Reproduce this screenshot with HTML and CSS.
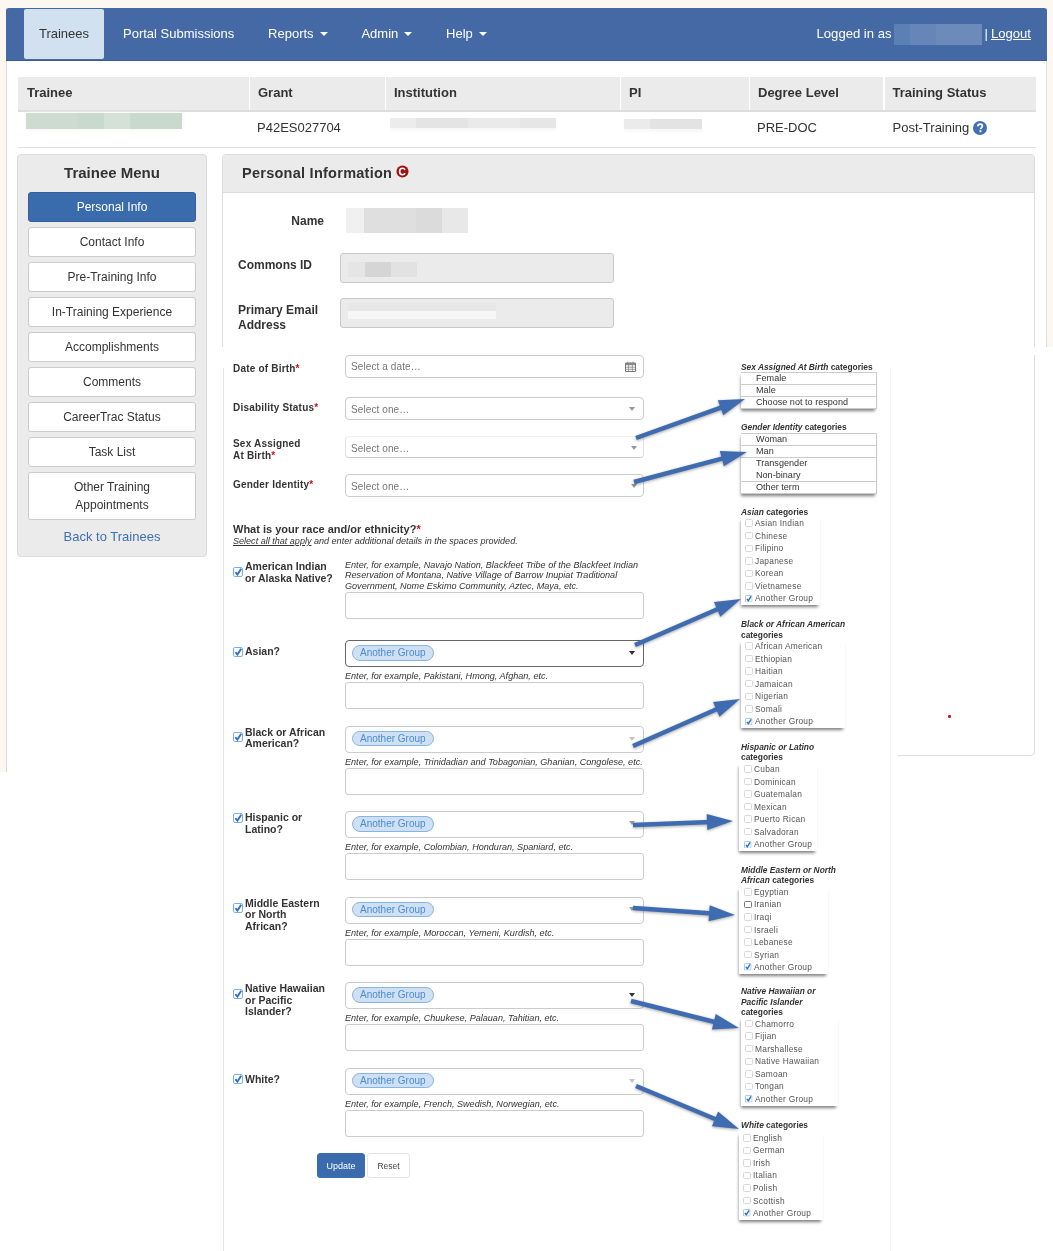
FILE: index.html
```html
<!DOCTYPE html>
<html lang="en">
<head>
<meta charset="utf-8">
<title>Personal Information</title>
<link rel="stylesheet" href="styles.css">
</head>
<body>
<svg class="defs" width="0" height="0" aria-hidden="true">
  <symbol id="tick" viewBox="0 0 10 10"><rect x=".5" y=".5" width="9" height="9" rx="1.5" fill="#fff" stroke="#7db0ea"/><path d="M2.4 5.2 4.4 7.6 8.2 1.8" fill="none" stroke="#2f74c8" stroke-width="1.9"/></symbol>
  <marker id="head" markerUnits="userSpaceOnUse" markerWidth="30" markerHeight="18" refX="6" refY="9" orient="auto"><path d="M2 1 28 9 2 17Z" fill="#3f6cb0"/></marker>
</svg>

<div class="page">
  <div class="frame">
    <nav class="nav">
      <a class="tab">Trainees</a>
      <a class="nav-item nav-first">Portal Submissions</a>
      <a class="nav-item">Reports<i class="nav-caret"></i></a>
      <a class="nav-item">Admin<i class="nav-caret"></i></a>
      <a class="nav-item">Help<i class="nav-caret"></i></a>
      <div class="nav-user">Logged in as<span class="redact redact-user"></span><span class="pipe">|</span><a class="logout">Logout</a></div>
    </nav>

    <div class="content">
      <div class="summary">
        <div class="summary-head">
          <div>Trainee</div><div>Grant</div><div>Institution</div><div>PI</div><div>Degree Level</div><div>Training Status</div>
        </div>
        <div class="summary-row">
          <div class="cell-trainee"><span class="redact redact-green"></span></div>
          <div class="cell-text">P42ES027704</div>
          <div class="cell-inst"><span class="redact redact-inst"></span></div>
          <div class="cell-pi"><span class="redact redact-pi"></span></div>
          <div class="cell-text">PRE-DOC</div>
          <div class="cell-status">Post-Training
            <svg class="help" viewBox="0 0 14 14" aria-hidden="true"><circle cx="7" cy="7" r="7" fill="#3f6fb5"/><path d="M4.7 5.4C4.8 3.9 5.8 3.1 7.1 3.1 8.500 3.100 9.400 4 9.400 5.100 9.400 6.500 7.500 6.700 7.500 8.300" fill="none" stroke="#fff" stroke-width="1.700"/><rect x="6.500" y="9.300" width="2" height="1.900" fill="#fff"/></svg>
          </div>
        </div>
      </div>

      <div class="columns">
        <aside class="menu">
          <h2 class="menu-title">Trainee Menu</h2>
          <a class="menu-btn menu-active">Personal Info</a>
          <a class="menu-btn">Contact Info</a>
          <a class="menu-btn">Pre-Training Info</a>
          <a class="menu-btn">In-Training Experience</a>
          <a class="menu-btn">Accomplishments</a>
          <a class="menu-btn">Comments</a>
          <a class="menu-btn">CareerTrac Status</a>
          <a class="menu-btn">Task List</a>
          <a class="menu-btn menu-tall">Other Training<br>Appointments</a>
          <a class="menu-back">Back to Trainees</a>
        </aside>

        <section class="card">
          <header class="card-head">
            <h1 class="card-title">Personal Information</h1>
            <svg class="c-icon" viewBox="0 0 14 14" aria-hidden="true"><circle cx="7" cy="7" r="6.500" fill="#a30f0f"/><path d="M9.800 5.200C9.100 3.900 8.100 3.500 7 3.500 5.100 3.500 3.900 5 3.900 7 3.900 9 5.100 10.500 7 10.500 8.100 10.500 9.100 10.100 9.800 8.800" fill="none" stroke="#fff" stroke-width="1.800"/></svg>
          </header>
          <div class="card-body">
            <div class="info-row info-name"><div class="info-label-right">Name</div><span class="redact redact-name"></span></div>
            <div class="info-row info-commons"><div class="info-label">Commons ID</div><div class="readonly"><span class="redact redact-commons"></span></div></div>
            <div class="info-row info-email"><div class="info-label">Primary Email<br>Address</div><div class="readonly"><span class="redact redact-email"></span></div></div>
          </div>
        </section>
      </div>
    </div>
  </div>
</div>

<div class="patch patch-top"></div>
<div class="patch patch-right"></div>
<i class="red-dot"></i>

<div class="sheet">
  <form class="form-col">
    <div class="row row-dob"><label class="f-label">Date of Birth<b>*</b></label><div class="field field-23"><span class="ph">Select a date…</span>
      <svg class="cal" viewBox="0 0 11 11" aria-hidden="true"><path d="M.5 2h10v8.500H.5z" fill="#fff" stroke="#777"/><path d="M.5 2h10v2.200H.5z" fill="#888"/><path d="M3 .5v2M8 .5v2M.5 6.200h10M.5 8.300h10M3.600 4v6M7.300 4v6" stroke="#888" stroke-width=".8"/></svg></div></div>
    <div class="row row-dis"><label class="f-label f-label-dis">Disability Status<b>*</b></label><div class="field field-23"><span class="ph ph-sel">Select one…</span><i class="caret"></i></div></div>
    <div class="row row-sex"><label class="f-label f-label-sex">Sex Assigned<br>At Birth<b>*</b></label><div class="field field-22 field-soft"><span class="ph ph-sel">Select one…</span><i class="caret caret-right"></i></div></div>
    <div class="row row-gender"><label class="f-label f-label-gender">Gender Identity<b>*</b></label><div class="field field-23"><span class="ph ph-sel">Select one…</span><i class="caret caret-right"></i></div></div>

    <h3 class="race-title">What is your race and/or ethnicity?<b>*</b></h3>
    <p class="race-sub"><u>Select all that apply</u> and enter additional details in the spaces provided.</p>

    <div class="race-row race-first">
      <div class="race-label"><svg class="check"><use href="#tick"/></svg><span>American Indian<br>or Alaska Native?</span></div>
      <div class="race-field">
        <p class="hint hint-long">Enter, for example, Navajo Nation, Blackfeet Tribe of the Blackfeet Indian Reservation of Montana, Native Village of Barrow Inupiat Traditional Government, Nome Eskimo Community, Aztec, Maya, etc.</p>
        <input class="detail" type="text">
      </div>
    </div>

    <div class="race-list">
      <div class="race-row">
        <div class="race-label race-label-low"><svg class="check check-top"><use href="#tick"/></svg><span>Asian?</span></div>
        <div class="race-field"><div class="field field-27 field-focus"><span class="chip">Another Group</span><i class="caret caret-dark"></i></div><p class="hint">Enter, for example, Pakistani, Hmong, Afghan, etc.</p><input class="detail" type="text"></div>
      </div>
      <div class="race-row">
        <div class="race-label"><svg class="check"><use href="#tick"/></svg><span>Black or African<br>American?</span></div>
        <div class="race-field"><div class="field field-27"><span class="chip">Another Group</span><i class="caret caret-light"></i></div><p class="hint">Enter, for example, Trinidadian and Tobagonian, Ghanian, Congolese, etc.</p><input class="detail" type="text"></div>
      </div>
      <div class="race-row">
        <div class="race-label"><svg class="check check-top"><use href="#tick"/></svg><span>Hispanic or<br>Latino?</span></div>
        <div class="race-field"><div class="field field-27"><span class="chip">Another Group</span><i class="caret"></i></div><p class="hint">Enter, for example, Colombian, Honduran, Spaniard, etc.</p><input class="detail" type="text"></div>
      </div>
      <div class="race-row">
        <div class="race-label"><svg class="check"><use href="#tick"/></svg><span>Middle Eastern<br>or North<br>African?</span></div>
        <div class="race-field"><div class="field field-27"><span class="chip">Another Group</span><i class="caret"></i></div><p class="hint">Enter, for example, Moroccan, Yemeni, Kurdish, etc.</p><input class="detail" type="text"></div>
      </div>
      <div class="race-row">
        <div class="race-label"><svg class="check"><use href="#tick"/></svg><span>Native Hawaiian<br>or Pacific<br>Islander?</span></div>
        <div class="race-field"><div class="field field-27"><span class="chip">Another Group</span><i class="caret caret-dark"></i></div><p class="hint">Enter, for example, Chuukese, Palauan, Tahitian, etc.</p><input class="detail" type="text"></div>
      </div>
      <div class="race-row">
        <div class="race-label race-label-low"><svg class="check check-top"><use href="#tick"/></svg><span>White?</span></div>
        <div class="race-field"><div class="field field-27"><span class="chip">Another Group</span><i class="caret caret-light"></i></div><p class="hint">Enter, for example, French, Swedish, Norwegian, etc.</p><input class="detail" type="text"></div>
      </div>
    </div>

    <div class="actions"><button class="btn-update" type="button">Update</button><button class="btn-reset" type="button">Reset</button></div>
  </form>

  <div class="notes">
    <div class="cat cat-list">
      <div class="cat-title"><em>Sex Assigned At Birth</em> categories</div>
      <ul class="list-box"><li>Female</li><li>Male</li><li>Choose not to respond</li></ul>
    </div>
    <div class="cat cat-list">
      <div class="cat-title"><em>Gender Identity</em> categories</div>
      <ul class="list-box"><li>Woman</li><li>Man</li><li class="no-line">Transgender</li><li>Non-binary</li><li>Other term</li></ul>
    </div>
    <div class="cat">
      <div class="cat-title"><em>Asian</em> categories</div>
      <ul class="check-box w-asian">
        <li><i class="box"></i>Asian Indian</li><li><i class="box"></i>Chinese</li><li><i class="box"></i>Filipino</li><li><i class="box"></i>Japanese</li><li><i class="box"></i>Korean</li><li><i class="box"></i>Vietnamese</li><li><svg class="box-on"><use href="#tick"/></svg>Another Group</li>
      </ul>
    </div>
    <div class="cat">
      <div class="cat-title"><em>Black or African American</em><br>categories</div>
      <ul class="check-box w-black">
        <li><i class="box"></i>African American</li><li><i class="box"></i>Ethiopian</li><li><i class="box"></i>Haitian</li><li><i class="box"></i>Jamaican</li><li><i class="box"></i>Nigerian</li><li><i class="box"></i>Somali</li><li><svg class="box-on"><use href="#tick"/></svg>Another Group</li>
      </ul>
    </div>
    <div class="cat">
      <div class="cat-title"><em>Hispanic or Latino</em><br>categories</div>
      <ul class="check-box w-hisp">
        <li><i class="box"></i>Cuban</li><li><i class="box"></i>Dominican</li><li><i class="box"></i>Guatemalan</li><li><i class="box"></i>Mexican</li><li><i class="box"></i>Puerto Rican</li><li><i class="box"></i>Salvadoran</li><li><svg class="box-on"><use href="#tick"/></svg>Another Group</li>
      </ul>
    </div>
    <div class="cat">
      <div class="cat-title"><em>Middle Eastern or North<br>African</em> categories</div>
      <ul class="check-box w-mid">
        <li><i class="box"></i>Egyptian</li><li><i class="box box-dark"></i>Iranian</li><li><i class="box"></i>Iraqi</li><li><i class="box"></i>Israeli</li><li><i class="box"></i>Lebanese</li><li><i class="box"></i>Syrian</li><li><svg class="box-on"><use href="#tick"/></svg>Another Group</li>
      </ul>
    </div>
    <div class="cat cat-native">
      <div class="cat-title"><em>Native Hawaiian or<br>Pacific Islander</em><br>categories</div>
      <ul class="check-box w-native">
        <li><i class="box"></i>Chamorro</li><li><i class="box"></i>Fijian</li><li><i class="box"></i>Marshallese</li><li><i class="box"></i>Native Hawaiian</li><li><i class="box"></i>Samoan</li><li><i class="box"></i>Tongan</li><li><svg class="box-on"><use href="#tick"/></svg>Another Group</li>
      </ul>
    </div>
    <div class="cat">
      <div class="cat-title"><em>White</em> categories</div>
      <ul class="check-box w-white">
        <li><i class="box"></i>English</li><li><i class="box"></i>German</li><li><i class="box"></i>Irish</li><li><i class="box"></i>Italian</li><li><i class="box"></i>Polish</li><li><i class="box"></i>Scottish</li><li><svg class="box-on"><use href="#tick"/></svg>Another Group</li>
      </ul>
    </div>
  </div>

  <svg class="arrows" viewBox="222 347 676 904" aria-hidden="true">
    <g stroke="#3f6cb0" stroke-width="4.500">
      <line x1="636" y1="438" x2="724.300" y2="406.400" marker-end="url(#head)"/>
      <line x1="634" y1="482" x2="725.700" y2="457.600" marker-end="url(#head)"/>
      <line x1="635" y1="645" x2="720.800" y2="607.800" marker-end="url(#head)"/>
      <line x1="633" y1="746" x2="719.900" y2="707.800" marker-end="url(#head)"/>
      <line x1="633" y1="825" x2="711" y2="821.900" marker-end="url(#head)"/>
      <line x1="633" y1="908" x2="713.100" y2="913.500" marker-end="url(#head)"/>
      <line x1="631" y1="1001" x2="717.700" y2="1022.700" marker-end="url(#head)"/>
      <line x1="636" y1="1086" x2="718.700" y2="1120.500" marker-end="url(#head)"/>
    </g>
  </svg>
</div>
</body>
</html>
```
FILE: styles.css
```css
* { box-sizing: border-box; }
html, body { margin: 0; padding: 0; background: #fff; }
body {
  position: relative;
  height: 1251px;
  overflow: hidden;
  font-family: "Liberation Sans", Arial, sans-serif;
  color: #333;
  filter: blur(.3px);
}
.defs { position: absolute; }
a { color: inherit; text-decoration: none; }
h1, h2, h3, p, ul { margin: 0; padding: 0; }
ul { list-style: none; }
i { display: block; }

/* page frame */
.page { height: 772px; padding: 8px 6px 0; background: #fcf7f1; }
.frame { height: 764px; background: #fff; border-left: 1px solid #ddd; border-right: 1px solid #ddd; }

/* nav */
.nav {
  height: 53px;
  margin: 0 -1px;
  padding: 1px 16px 1px 18px;
  display: flex;
  align-items: stretch;
  background: #4469a5;
  border-bottom: 1px solid #3b5e96;
  border-radius: 3px 3px 0 0;
  color: #fff;
  font-size: 13px;
}
.tab { width: 80px; padding-bottom: 2px; display: flex; align-items: center; justify-content: center; background: #d2e1f0; color: #333; border-radius: 2px; }
.nav-item { display: flex; align-items: center; margin-left: 33.800px; padding-bottom: 2px; }
.nav-first { margin-left: 19px; }
.nav-caret { width: 0; height: 0; margin: 2px 0 0 6px; border: 4px solid transparent; border-top-color: #fff; border-bottom: 0; }
.nav-user { margin-left: auto; padding-bottom: 2px; display: flex; align-items: center; font-size: 13.100px; }
.redact-user { width: 88px; height: 21px; margin: 2px 3px 0 2px; background: linear-gradient(90deg, #5d80b4 0 16px, #6685b8 16px 42px, #6c8bbb 42px); }
.pipe { margin-right: 3px; }
.logout { text-decoration: underline; }

.content { padding: 0 10px; }

/* summary table */
.summary { margin: 16px 0 0 1px; font-size: 13px; }
.summary-head, .summary-row { display: grid; grid-template-columns: 230.5px 134.5px 233.5px 127.5px 133px 151.5px; column-gap: 1.5px; }
.summary-head { height: 35px; border-bottom: 2px solid #ddd; font-size: 13px; font-weight: bold; }
.summary-head > div { padding: 0 8px; background: #ebebeb; line-height: 31px; }
.summary-head > div:first-child { padding-left: 9px; }
.summary-row { height: 36px; border-bottom: 1px solid #e2e2e2; }
.redact { display: block; }
.redact-green { width: 156px; height: 16px; margin: 1px 0 0 8px; box-shadow: 0 0 5px #f3f3f3; background: linear-gradient(90deg, #cddcce 0 52px, #c9d9cb 52px 78px, #d4e2d5 78px 104px, #c9d9cb 104px); }
.cell-text { padding: 9px 0 0 7px; line-height: 14px; }
.cell-inst { padding: 6px 0 0 4px; }
.redact-inst { width: 166px; height: 10px; box-shadow: 0 3px 3px #f8f8f8; background: linear-gradient(90deg, #ececec 0 26px, #e4e4e4 26px 78px, #eaeaea 78px 130px, #e6e6e6 130px); }
.cell-pi { padding: 7px 0 0 3px; }
.redact-pi { width: 78px; height: 10px; box-shadow: 0 3px 3px #f8f8f8; background: linear-gradient(90deg, #ebebeb 0 26px, #e3e3e3 26px); }
.cell-status { padding: 9px 0 0 8px; display: flex; align-items: flex-start; line-height: 14px; gap: 4px; white-space: nowrap; }
.help { width: 14px; height: 14px; }

/* columns */
.columns { display: flex; gap: 15px; margin-top: 6px; }
.menu {
  width: 190px;
  height: 403px;
  padding: 0 10px;
  display: flex;
  flex-direction: column;
  background: #ebebeb;
  border: 1px solid #ddd;
  border-radius: 4px;
  font-size: 12px;
}
.menu-title { height: 37px; margin: 0; font-size: 15px; line-height: 36px; text-align: center; }
.menu-btn { height: 30px; margin-bottom: 5px; display: flex; align-items: center; justify-content: center; text-align: center; background: #fff; border: 1px solid #ccc; border-radius: 3px; line-height: 18px; }
.menu-active { background: #3a6cad; border-color: #345f9b; color: #fff; }
.menu-tall { height: 48px; }
.menu-back { margin-top: 3px; color: #3f6fb0; font-size: 13px; line-height: 18px; text-align: center; }

.card { width: 813px; height: 602px; position: relative; background: #fff; border: 1px solid #ddd; border-radius: 4px; }
.card-head { height: 38px; padding: 0 0 2px 19px; display: flex; align-items: center; background: #ebebeb; border-bottom: 1px solid #ddd; border-radius: 3px 3px 0 0; }
.card-title { font-size: 14.500px; letter-spacing: .26px; }
.c-icon { width: 13px; height: 13px; margin: -3px 0 0 4px; }
.card-body { padding-top: 15px; font-size: 12px; font-weight: bold; }
.info-row { display: flex; }
.info-name { height: 25px; margin-bottom: 20px; align-items: center; }
.info-label-right { width: 101px; text-align: right; }
.redact-name { width: 122px; height: 25px; margin-left: 22px; background: linear-gradient(90deg, #f0f0f0 0 18px, #dfdfdf 18px 70px, #dbdbdb 70px 96px, #e8e8e8 96px); }
.info-commons { height: 30px; margin-bottom: 15px; }
.info-email { height: 30px; }
.info-label { width: 117px; padding: 5px 0 0 15px; line-height: 15px; }
.readonly { width: 274px; height: 30px; padding: 5px 7px; background: #ebebeb; border: 1px solid #c9c9c9; border-radius: 3px; }
.redact-commons { width: 69px; height: 15px; margin-top: 3px; background: linear-gradient(90deg, #e5e5e5 0 17px, #d5d5d5 17px 43px, #e2e2e2 43px); }
.redact-email { width: 148px; height: 16px; margin-top: -1px; background: linear-gradient(180deg, #e7e7e7 0 8px, #f6f6f6 8px); }

/* overlays of the pasted mock-up */
.patch { position: absolute; background: #fff; }
.patch-top { left: 898px; top: 347px; width: 155px; height: 8px; }
.patch-right { left: 1036px; top: 347px; width: 17px; height: 425px; }
.red-dot { position: absolute; left: 948px; top: 715px; width: 2.500px; height: 2.500px; background: #d0101c; border-radius: 50%; }

.sheet { position: absolute; left: 222px; top: 347px; width: 676px; height: 904px; display: flex; background: #fff; filter: blur(.3px); }
.sheet::before, .sheet::after { content: ""; position: absolute; top: 21px; bottom: 0; width: 1px; }
.sheet::before { left: 1px; background: #e4e4e4; }
.sheet::after { left: 668px; background: #f2f2f2; }

/* form */
.form-col { width: 422px; flex: none; padding: 8px 0 0 11px; font-size: 10px; }
.row { display: flex; margin-bottom: 19px; }
.row-dis { margin-bottom: 16px; }
.row-sex { margin-bottom: 16px; }
.row-gender { margin-bottom: 26px; }
.f-label { width: 112px; flex: none; padding-top: 8px; font-weight: bold; letter-spacing: .2px; line-height: 12px; color: #333; }
.f-label b, .race-title b { color: #d0101c; }
.f-label-dis { padding-top: 5px; }
.f-label-sex { height: 22px; padding-top: 2px; }
.f-label-gender { padding-top: 5px; }
.field { position: relative; width: 299px; display: flex; align-items: center; padding-left: 6px; background: #fff; border: 1px solid #ccc; border-radius: 4px; }
.field-23 { height: 23px; }
.field-22 { height: 22px; }
.field-27 { height: 27px; }
.field-soft { border-color: #eee #e4e4e4 #ccc; }
.field-focus { border-color: #666; }
.ph { margin-left: -1px; color: #777; letter-spacing: .1px; }
.ph-sel { margin-top: 2px; }
.cal { position: absolute; right: 7px; top: 5px; width: 11px; height: 11px; }
.caret { position: absolute; right: 8px; top: 9px; width: 0; height: 0; border: 3.500px solid transparent; border-top: 4px solid #999; border-bottom: 0; }
.caret-right { right: 6px; }
.caret-dark { top: 10px; border-top-color: #333; }
.caret-light { top: 10px; border-top-color: #c4c4c4; }
.chip { padding: 0 7px; height: 15.500px; margin-top: -1px; background: #cfe0f3; border: 1px solid #86b4e6; border-radius: 8px; color: #4a8cd4; font-size: 10px; line-height: 14px; }

.race-title { height: 12px; font-size: 11px; line-height: 12px; }
.race-sub { height: 13px; margin-top: 0; font-size: 9.050px; font-style: italic; line-height: 12px; }
.race-row { display: flex; }
.race-first { margin-top: 12px; margin-bottom: 21px; }
.race-list { display: flex; flex-direction: column; gap: 16.500px; }
.race-label { width: 112px; flex: none; display: flex; padding-top: 1px; font-weight: bold; font-size: 10.500px; line-height: 11.500px; }
.race-label-low { padding-top: 6px; }
.check { width: 10px; height: 10px; flex: none; margin: 5.500px 2px 0 0; }
.check-top { margin-top: .500px; }
.race-field { width: 299px; }
.hint { height: 15px; padding-top: 4px; font-size: 9.080px; font-style: italic; line-height: 10.400px; white-space: nowrap; }
.hint-long { height: 32px; padding-top: 0; white-space: normal; }
.detail { display: block; width: 299px; height: 27px; padding: 0; background: #fff; border: 1px solid #ccc; border-radius: 3px; }
.actions { display: flex; gap: 2px; margin: 16.500px 0 0 84px; }
.btn-update, .btn-reset { height: 25px; padding: 0; border-radius: 3px; font-family: inherit; font-size: 9px; }
.btn-update { width: 48px; background: #3a6cad; border: 1px solid #3a6cad; color: #fff; }
.btn-reset { width: 43px; background: #fff; border: 1px solid #e4e4e4; color: #444; font-size: 8.500px; }

/* category annotations */
.notes { width: 157px; flex: none; margin-left: 97px; padding-top: 15px; font-size: 8px; }
.cat { margin-bottom: 14px; }
.cat-list { margin-bottom: 13px; }
.cat-native { margin-top: -1.500px; }
.cat-title { font-weight: bold; font-size: 8.400px; line-height: 10.300px; color: #333; white-space: nowrap; }
.list-box { width: 136px; background: #fff; border-top: 1px solid #ccc; border-right: 1px solid #ccc; box-shadow: -1px 3px 3px -1px rgba(0,0,0,.5); font-size: 9.100px; }
.list-box li { height: 12px; padding-left: 15px; line-height: 11px; border-bottom: 1px solid #ccc; }
.list-box li.no-line { border-bottom-color: transparent; }
.check-box { padding-bottom: .500px; background: #fff; box-shadow: -1px 3px 3px -1px rgba(0,0,0,.5); font-size: 8.400px; color: #555; letter-spacing: .25px; }
.check-box li { height: 12.550px; padding-left: 4px; display: flex; align-items: center; gap: 2.500px; white-space: nowrap; }
.box { width: 7.500px; height: 7.500px; flex: none; background: #fff; border: 1px solid #d8d8d8; border-radius: 1.500px; }
.box-dark { border-color: #777; }
.box-on { width: 7.500px; height: 7.500px; flex: none; }
.w-asian { width: 79px; }
.w-black { width: 104px; }
.w-hisp { width: 78px; margin-left: -2px; }
.w-hisp li { padding-left: 5px; }
.w-mid { width: 89px; margin-left: -2px; }
.w-mid li { padding-left: 5px; }
.w-native { width: 97px; }
.w-white { width: 84px; margin: 1.500px 0 0 -2px; }

.arrows { position: absolute; inset: 0; width: 676px; height: 904px; pointer-events: none; filter: drop-shadow(0 1px 1.500px rgba(0,0,0,.35)); }
```
